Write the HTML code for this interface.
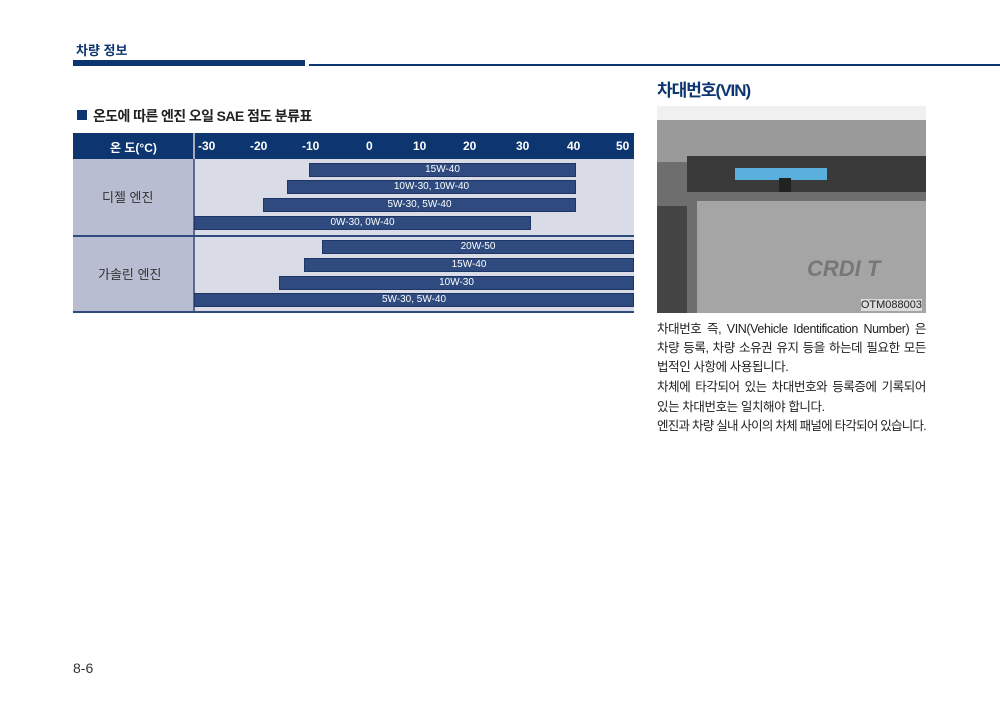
<!DOCTYPE html>
<html><head><meta charset="utf-8"><style>
*{margin:0;padding:0;box-sizing:border-box}
body{width:1000px;height:712px;background:#fff;position:relative;overflow:hidden;font-family:"Liberation Sans","Noto Sans CJK KR",sans-serif}
.a{position:absolute}
.bar{position:absolute;background:#2e4a7e;border:1px solid #1e3566;color:#fff;font-size:10px;text-align:center;line-height:12px;height:14px}
.hd{position:absolute;top:139px;color:#fff;font-size:12px;font-weight:bold}
.t{position:absolute;left:657px;width:269px;font-size:12.5px;color:#222;letter-spacing:-0.4px;white-space:nowrap}
.j{text-align:justify;text-align-last:justify}
</style></head><body>
<div class="a" style="left:76px;top:40px;font-size:13px;font-weight:bold;color:#0d3570">차량 정보</div>
<div class="a" style="left:73px;top:60px;width:232px;height:6px;background:#0d3570"></div>
<div class="a" style="left:309px;top:64px;width:691px;height:2px;background:#0d3570"></div>

<div class="a" style="left:77px;top:110px;width:10px;height:10px;background:#0d3570"></div>
<div class="a" style="left:93px;top:106px;font-size:14px;font-weight:bold;color:#222;letter-spacing:-0.6px">온도에 따른 엔진 오일 SAE 점도 분류표</div>

<div class="a" style="left:73px;top:133px;width:561px;height:26px;background:#0d3570"></div>
<div class="a" style="left:193px;top:133px;width:2px;height:26px;background:#aab"></div>
<div class="hd" style="left:110px">온 도(°C)</div>
<div class="hd" style="left:198px">-30</div>
<div class="hd" style="left:250px">-20</div>
<div class="hd" style="left:302px">-10</div>
<div class="hd" style="left:366px">0</div>
<div class="hd" style="left:413px">10</div>
<div class="hd" style="left:463px">20</div>
<div class="hd" style="left:516px">30</div>
<div class="hd" style="left:567px">40</div>
<div class="hd" style="left:616px">50</div>

<div class="a" style="left:73px;top:159px;width:121px;height:153px;background:#b9bdd2"></div>
<div class="a" style="left:194px;top:159px;width:440px;height:153px;background:#d9dbe6"></div>
<div class="a" style="left:193px;top:159px;width:2px;height:153px;background:#5a6a90"></div>
<div class="a" style="left:73px;top:235px;width:561px;height:2px;background:#2e4a7e"></div>
<div class="a" style="left:73px;top:311px;width:561px;height:2px;background:#2e4a7e"></div>
<div class="a" style="left:102px;top:187px;font-size:13px;color:#333">디젤 엔진</div>
<div class="a" style="left:98px;top:264px;font-size:13px;color:#333">가솔린 엔진</div>

<div class="bar" style="left:309px;top:163px;width:267px">15W-40</div>
<div class="bar" style="left:287px;top:180px;width:289px">10W-30, 10W-40</div>
<div class="bar" style="left:263px;top:198px;width:313px">5W-30, 5W-40</div>
<div class="bar" style="left:194px;top:216px;width:337px">0W-30, 0W-40</div>
<div class="bar" style="left:322px;top:240px;width:312px">20W-50</div>
<div class="bar" style="left:304px;top:258px;width:330px">15W-40</div>
<div class="bar" style="left:279px;top:276px;width:355px">10W-30</div>
<div class="bar" style="left:194px;top:293px;width:440px">5W-30, 5W-40</div>

<div class="a" style="left:657px;top:76px;font-size:17px;font-weight:bold;color:#0d3570;letter-spacing:-1px">차대번호(VIN)</div>
<div class="a" style="left:657px;top:106px;width:269px;height:207px;background:#6e6e6e;overflow:hidden">
 <div class="a" style="left:0;top:0;width:269px;height:14px;background:#f0f0f0"></div>
 <div class="a" style="left:0;top:14px;width:269px;height:42px;background:#9a9a9a"></div>
 <div class="a" style="left:30px;top:50px;width:239px;height:36px;background:#3a3a3a"></div>
 <div class="a" style="left:78px;top:62px;width:92px;height:12px;background:#5ab0dc"></div>
 <div class="a" style="left:122px;top:72px;width:12px;height:14px;background:#222"></div>
 <div class="a" style="left:40px;top:95px;width:229px;height:112px;background:#a5a5a5"></div>
 <div class="a" style="left:150px;top:150px;font-size:22px;font-weight:bold;font-style:italic;color:#777">CRDI T</div>
 <div class="a" style="left:0;top:100px;width:30px;height:107px;background:#444"></div>
 <div class="a" style="right:4px;bottom:2px;font-size:11px;color:#222;background:rgba(255,255,255,.6)">OTM088003</div>
</div>
<div class="t j" style="top:318px">차대번호 즉, VIN(Vehicle Identification Number) 은</div>
<div class="t j" style="top:337px">차량 등록, 차량 소유권 유지 등을 하는데 필요한 모든</div>
<div class="t" style="top:356px">법적인 사항에 사용됩니다.</div>
<div class="t j" style="top:376px">차체에 타각되어 있는 차대번호와 등록증에 기록되어</div>
<div class="t" style="top:396px">있는 차대번호는 일치해야 합니다.</div>
<div class="t" style="top:415px;letter-spacing:-0.75px">엔진과 차량 실내 사이의 차체 패널에 타각되어 있습니다.</div>

<div class="a" style="left:73px;top:660px;font-size:14px;color:#333">8-6</div>
</body></html>
